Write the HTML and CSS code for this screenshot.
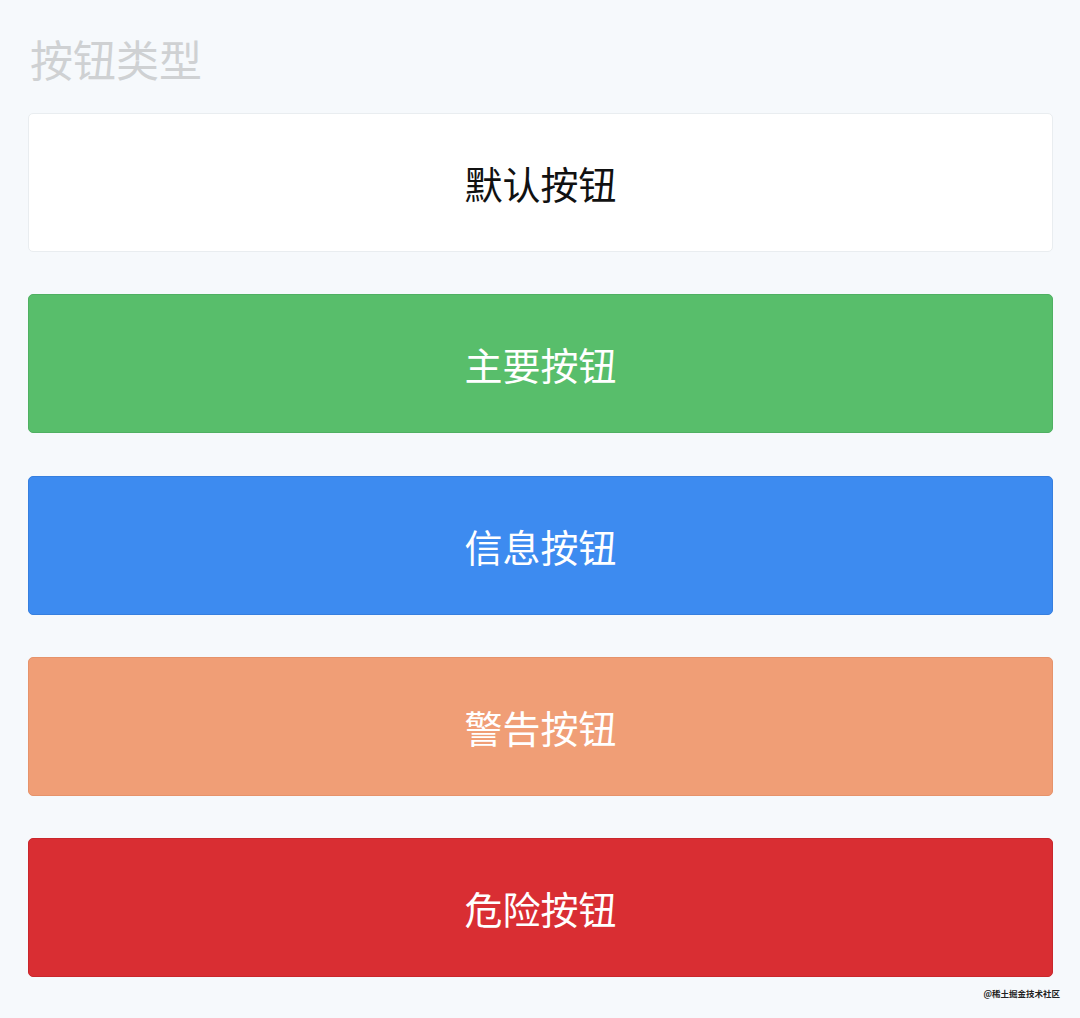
FILE: index.html
```html
<!DOCTYPE html>
<html>
  <head>
    <meta charset="utf-8">
    <title>按钮类型</title>
    <link rel="stylesheet" href="styles.css">
  </head>
  <body>
    <div class="page">
      <h1 class="title">按钮类型</h1>
      <div class="btnList">
        <button class="btn">默认按钮</button>
        <button class="btn primary">主要按钮</button>
        <button class="btn info">信息按钮</button>
        <button class="btn warn">警告按钮</button>
        <button class="btn danger">危险按钮</button>
      </div>
    </div>
    <div class="mark">@稀土掘金技术社区</div>
  </body>
</html>
```

FILE: styles.css
```css
html, body {
  margin: 0;
  padding: 0;
  background-color: #f6f9fc;
}
body {
  width: 1080px;
  height: 1018px;
  position: relative;
  overflow: hidden;
  font-family: "Noto Sans CJK SC", "Noto Sans", sans-serif;
}
.page {
  padding: 27px 27px 0 28px;
}
.title {
  margin: 0 0 0 2px;
  font-size: 43px;
  font-weight: normal;
  line-height: 62px;
  color: #cfd1d3;
}
.btnList {
  margin-top: 24px;
  display: flex;
  flex-direction: column;
  gap: 42.25px;
}
.btn {
  display: block;
  width: 100%;
  height: 139px;
  padding: 0;
  border: 1px solid #e9edf0;
  border-radius: 5px;
  background-color: #fff;
  color: #111;
  font-family: "Noto Sans CJK SC", "Noto Sans", sans-serif;
  font-size: 38px;
  letter-spacing: 0;
  text-align: center;
}
.btn.primary {
  background-color: #58be6b;
  border-color: #4fb062;
  color: #fff;
}
.btn.info {
  background-color: #3d8bf0;
  border-color: #367fdf;
  color: #fff;
}
.btn.warn {
  background-color: #f09e76;
  border-color: #e6936b;
  color: #fff;
}
.btn.danger {
  background-color: #d92e33;
  border-color: #c9272c;
  color: #fff;
}
.mark {
  position: absolute;
  right: 20px;
  top: 987px;
  font-size: 8.5px;
  font-weight: bold;
  color: #222;
  text-shadow: 0 0 2px #fff;
}
```
